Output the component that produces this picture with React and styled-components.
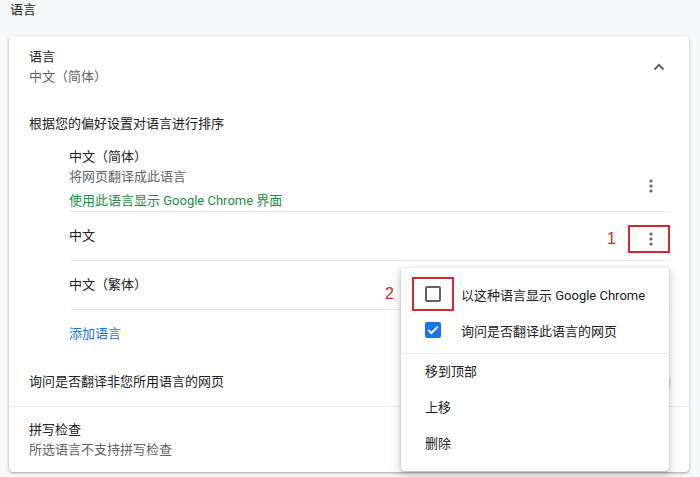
import React from 'react';
import styled, { createGlobalStyle } from 'styled-components';

const Global = createGlobalStyle`
  html, body { margin: 0; padding: 0; background: #f8f9fa; }
  body {
    font-family: Roboto, "Noto Sans CJK SC", sans-serif;
    font-size: 13px;
    color: #202124;
  }
  * { box-sizing: border-box; }
`;

const Page = styled.div`
  position: relative;
  width: 700px;
  height: 477px;
  overflow: hidden;
  padding: 0 11px 0 9px;
`;

const PageTitle = styled.div`
  padding-left: 1px;
  height: 20px;
  line-height: 20px;
  margin-bottom: 16px;
`;

const Card = styled.div`
  background: #fff;
  border-radius: 4px;
  box-shadow: 0 1px 2px rgba(60, 64, 67, 0.3), 0 1px 3px 1px rgba(60, 64, 67, 0.15);
`;

const HeaderRow = styled.div`
  display: flex;
  align-items: center;
  padding: 11px 20px 0;
`;

const TextBlock = styled.div`
  flex: 1;
  display: flex;
  flex-direction: column;
`;

const Line = styled.div`
  line-height: 20px;
  color: ${p => (p.$tone === 'secondary' ? '#5f6368' : p.$tone === 'green' ? '#1e8e3e' : p.$tone === 'link' ? '#1a73e8' : '#202124')};
  margin-top: ${p => p.$gap || 0}px;
  white-space: nowrap;
`;

const IconButton = styled.div`
  width: 20px;
  height: 20px;
  display: flex;
  align-items: center;
  justify-content: center;
`;

const SortLabel = styled.div`
  margin-top: 27px;
  padding: 0 20px;
  line-height: 20px;
`;

const LangList = styled.div`
  padding: 0 19px 0 60px;
`;

const LangItem = styled.div`
  display: flex;
  align-items: center;
  min-height: 49px;
  padding-top: ${p => p.$padTop || 0}px;
  border-bottom: 1px solid #e8eaed;
`;

const Kebab = styled.div`
  position: relative;
  width: 42px;
  height: 28px;
  display: flex;
  align-items: center;
  justify-content: center;
  padding-left: 4px;
  margin-top: ${p => p.$shift || 0}px;
  border: 2px solid ${p => (p.$marked ? '#cf2a2f' : 'transparent')};
`;

const Marker = styled.span`
  position: absolute;
  font-family: "Liberation Sans", Arial, sans-serif;
  font-size: 16px;
  line-height: 20px;
  color: #cf2a2f;
`;

const KebabMarker = styled(Marker)`
  right: calc(100% + 14px);
  top: 50%;
  transform: translateY(-50%);
`;

const AddRow = styled.div`
  height: 48px;
  display: flex;
  align-items: center;
`;

const ToggleRow = styled.div`
  display: flex;
  align-items: center;
  height: 49px;
  padding: 0 18px 0 20px;
  border-bottom: 1px solid #e8eaed;
`;

const Toggle = styled.div`
  position: relative;
  width: 28px;
  height: 14px;
  border-radius: 7px;
  background: #dadce0;
  &::after {
    content: '';
    position: absolute;
    left: -2px;
    top: -3px;
    width: 20px;
    height: 20px;
    border-radius: 50%;
    background: #fff;
    box-shadow: 0 1px 3px rgba(0, 0, 0, 0.4);
  }
`;

const SpellRow = styled.div`
  padding: 13px 20px 12px;
`;

const Menu = styled.div`
  position: absolute;
  left: 401px;
  top: 268px;
  width: 268px;
  padding: 8px 0 9px;
  background: #fff;
  border-radius: 4px;
  box-shadow: 0 1px 3px rgba(60, 64, 67, 0.3), 0 4px 8px 3px rgba(60, 64, 67, 0.15);
`;

const CheckItem = styled.div`
  position: relative;
  display: flex;
  align-items: center;
  height: 36px;
  padding-left: 11px;
  gap: 7px;
  white-space: nowrap;
`;

const CheckSlot = styled.div`
  width: 42px;
  height: 34px;
  display: flex;
  align-items: center;
  justify-content: center;
  border: 2px solid ${p => (p.$marked ? '#cf2a2f' : 'transparent')};
`;

const Box = styled.div`
  width: 16px;
  height: 16px;
  border-radius: 2px;
  border: 2px solid ${p => (p.$checked ? '#1a73e8' : '#5f6368')};
  background: ${p => (p.$checked ? '#1a73e8' : '#fff')};
  display: flex;
  align-items: center;
  justify-content: center;
`;

const MenuMarker = styled(Marker)`
  left: -16px;
  top: 50%;
  transform: translateY(-50%);
`;

const MenuDivider = styled.div`
  height: 1px;
  margin-top: 5px;
  background: #e8eaed;
`;

const MenuItem = styled.div`
  height: 36px;
  line-height: 36px;
  padding-left: 24px;
`;

const Dots = () => (
  <svg width="4" height="14" viewBox="0 0 4 14">
    <circle cx="2" cy="2" r="1.6" fill="#5f6368" />
    <circle cx="2" cy="7" r="1.6" fill="#5f6368" />
    <circle cx="2" cy="12" r="1.6" fill="#5f6368" />
  </svg>
);

const ChevronUp = () => (
  <svg width="12" height="8" viewBox="0 0 12 8">
    <path d="M1.5 6.5 L6 2 L10.5 6.5" fill="none" stroke="#5f6368" strokeWidth="2" />
  </svg>
);

const Check = () => (
  <svg width="12" height="10" viewBox="0 0 12 10">
    <path d="M1.2 5 L4.4 8 L10.8 1.6" fill="none" stroke="#fff" strokeWidth="2" />
  </svg>
);

export default function App() {
  return (
    <Page>
      <Global />
      <PageTitle>语言</PageTitle>
      <Card>
        <HeaderRow>
          <TextBlock>
            <Line>语言</Line>
            <Line $tone="secondary">中文（简体）</Line>
          </TextBlock>
          <IconButton>
            <ChevronUp />
          </IconButton>
        </HeaderRow>
        <SortLabel>根据您的偏好设置对语言进行排序</SortLabel>
        <LangList>
          <LangItem $padTop={13}>
            <TextBlock>
              <Line>中文（简体）</Line>
              <Line $tone="secondary">将网页翻译成此语言</Line>
              <Line $tone="green" $gap={4}>使用此语言显示 Google Chrome 界面</Line>
            </TextBlock>
            <Kebab $shift={14}>
              <Dots />
            </Kebab>
          </LangItem>
          <LangItem>
            <TextBlock>
              <Line>中文</Line>
            </TextBlock>
            <Kebab $marked $shift={6}>
              <KebabMarker>1</KebabMarker>
              <Dots />
            </Kebab>
          </LangItem>
          <LangItem>
            <TextBlock>
              <Line>中文（繁体）</Line>
            </TextBlock>
            <Kebab>
              <Dots />
            </Kebab>
          </LangItem>
          <AddRow>
            <Line $tone="link">添加语言</Line>
          </AddRow>
        </LangList>
        <ToggleRow>
          <TextBlock>
            <Line>询问是否翻译非您所用语言的网页</Line>
          </TextBlock>
          <Toggle />
        </ToggleRow>
        <SpellRow>
          <Line>拼写检查</Line>
          <Line $tone="secondary">所选语言不支持拼写检查</Line>
        </SpellRow>
      </Card>
      <Menu>
        <CheckItem>
          <MenuMarker>2</MenuMarker>
          <CheckSlot $marked>
            <Box />
          </CheckSlot>
          以这种语言显示 Google Chrome
        </CheckItem>
        <CheckItem>
          <CheckSlot>
            <Box $checked>
              <Check />
            </Box>
          </CheckSlot>
          询问是否翻译此语言的网页
        </CheckItem>
        <MenuDivider />
        <MenuItem>移到顶部</MenuItem>
        <MenuItem>上移</MenuItem>
        <MenuItem>删除</MenuItem>
      </Menu>
    </Page>
  );
}
